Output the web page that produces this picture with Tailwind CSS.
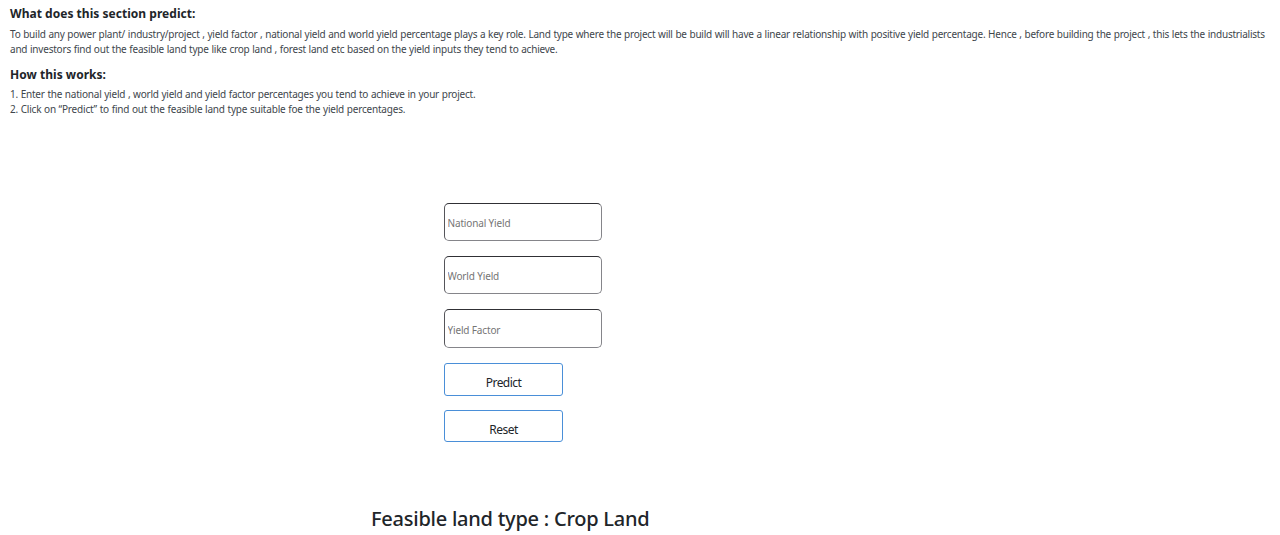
<!DOCTYPE html>
<html lang="en"><head><meta charset="utf-8"><title>Feasible land type</title>
<script src="https://cdn.jsdelivr.net/npm/@tailwindcss/browser@4"></script></head>
<body class="bg-white font-['Noto_Sans',sans-serif] text-[#212529] h-[535px] overflow-hidden">
<section class="pl-[10px] pt-[5px] text-[10px] leading-[15px] whitespace-nowrap text-[#40464c]">
<h2 class="text-[12px] leading-[18px] font-bold tracking-[0.03px] text-[#212529]">What does this section predict:</h2>
<p class="mt-[4px] [word-spacing:0.3px]"><span class="tracking-[-0.216px]">To build any power plant/ industry/project , yield factor , national yield and world yield percentage plays a key role. Land type where the project will be build will have a linear relationship with positive yield percentage. Hence , before building the project , this lets the industrialists</span><br><span class="tracking-[-0.21px]">and investors find out the feasible land type like crop land , forest land etc based on the yield inputs they tend to achieve.</span></p>
<h2 class="mt-[9px] text-[12px] leading-[18px] font-bold tracking-[0.03px] text-[#212529]">How this works:</h2>
<p class="mt-[3px] [word-spacing:0.3px]"><span class="tracking-[-0.215px]">1. Enter the national yield , world yield and yield factor percentages you tend to achieve in your project.</span><br><span class="tracking-[-0.195px]">2. Click on “Predict” to find out the feasible land type suitable foe the yield percentages.</span></p>
</section>
<form class="ml-[444px] mt-[86px] flex flex-col items-start gap-[15px]">
<input class="h-[38px] w-[158px] rounded-[5px] border border-[#85858a] border-t-[#303035] border-l-[#55555a] pt-px pl-[2.5px] text-[10px] tracking-[-0.15px] placeholder:text-[#757575]" placeholder="National Yield">
<input class="h-[38px] w-[158px] rounded-[5px] border border-[#85858a] border-t-[#303035] border-l-[#55555a] pt-px pl-[2.5px] text-[10px] tracking-[-0.15px] placeholder:text-[#757575]" placeholder="World Yield">
<input class="h-[39px] w-[158px] rounded-[5px] border border-[#85858a] border-t-[#303035] border-l-[#55555a] pt-[2px] pl-[2.5px] text-[10px] tracking-[-0.15px] placeholder:text-[#757575]" placeholder="Yield Factor">
<button type="button" class="h-[33px] w-[119px] rounded-[3px] border border-[#4a8fd8] pt-[6px] text-[12px] leading-[18px] tracking-[-0.55px] text-[#212529]">Predict</button>
<button type="button" class="-mt-px h-[32px] w-[119px] rounded-[3px] border border-[#4a8fd8] pt-[7px] text-[12px] leading-[18px] tracking-[-0.5px] text-[#212529]">Reset</button>
</form>
<h1 class="ml-[371px] mt-[62px] text-[20px] leading-[30px] font-medium tracking-[-0.24px] whitespace-nowrap">Feasible land type : Crop Land</h1>
</body></html>
